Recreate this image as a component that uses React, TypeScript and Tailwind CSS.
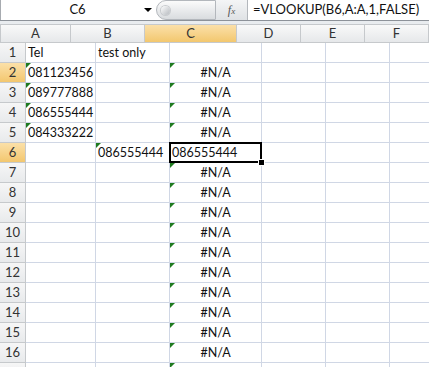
import React from 'react';

const cols = [
    { key: 'A', w: 'w-[70px]' },
    { key: 'B', w: 'w-[74px]' },
    { key: 'C', w: 'w-[92px]' },
    { key: 'D', w: 'w-[64px]' },
    { key: 'E', w: 'w-[64px]' },
    { key: 'F', w: 'w-[64px]' },
];

type Cell = { text: string; align?: 'left' | 'center'; flag?: boolean };

const phones = ['081123456', '089777888', '086555444', '084333222'];

function getCell(row: number, col: string): Cell | null {
    if (row === 1 && col === 'A') return { text: 'Tel' };
    if (row === 1 && col === 'B') return { text: 'test only' };
    if (row >= 2 && row <= 5 && col === 'A') return { text: phones[row - 2], flag: true };
    if (row === 6 && col === 'B') return { text: '086555444', flag: true };
    if (row === 6 && col === 'C') return { text: '086555444' };
    // row 17 is only a sliver at the bottom edge, so just its flag shows
    if (row === 17 && col === 'C') return { text: '', flag: true };
    if (row >= 2 && col === 'C') return { text: '#N/A', align: 'center', flag: true };
    return null;
}

function Flag() {
    return <span className="absolute left-0 top-0 h-0 w-0 border-r-[5px] border-t-[5px] border-r-transparent border-t-[#1f7a1f]" />;
}

export default function App() {
    const rows = Array.from({ length: 17 }, (_, i) => i + 1);
    return (
        <div className="h-[367px] w-[429px] overflow-hidden bg-white text-[12.5px] text-[#111]" style={{ fontFamily: 'Lato, "Open Sans", sans-serif' }}>
            {/* formula bar */}
            <div className="flex h-[21px] border-b border-[#8d9299] bg-white">
                <div className="flex w-[156px] items-center border-l border-[#a7abb0]">
                    <span className="flex-1 pl-[10px] text-center text-[13px]">C6</span>
                    <span className="mr-[4px] h-0 w-0 border-x-[4px] border-t-[4px] border-x-transparent border-t-black" />
                </div>
                <div className="relative flex w-[60px] items-center rounded-l-full border border-[#b3b7bc] bg-gradient-to-b from-[#fbfbfb] to-[#d9dcdf]">
                    <span className="ml-[4px] h-[9px] w-[9px] rounded-full bg-gradient-to-br from-white to-[#b5b9be] shadow-[0_0_0_1px_#c8cbce]" />
                </div>
                <div className="flex w-[32px] items-center justify-center border-r border-[#b3b7bc] bg-gradient-to-b from-[#f4f5f6] to-[#dfe2e5]">
                    <span className="text-[12px] italic text-[#555]" style={{ fontFamily: '"Liberation Serif", serif' }}>
                        f<span className="text-[9px]">x</span>
                    </span>
                </div>
                <div className="flex flex-1 items-center pl-[5px] text-[13px]">=VLOOKUP(B6,A:A,1,FALSE)</div>
            </div>
            <div className="h-[3px] bg-[#e9ecef]" />

            {/* header row */}
            <div className="flex h-[19px] border-y border-[#c6c9cc]">
                <div className="relative w-[26px] border-r border-[#c6c9cc] bg-gradient-to-b from-[#f5f5f5] to-[#e2e4e6]">
                    <span className="absolute bottom-[2px] right-[2px] h-0 w-0 border-b-[10px] border-l-[10px] border-b-[#b0b4b8] border-l-transparent" />
                </div>
                {cols.map((c) => (
                    <div
                        key={c.key}
                        className={`${c.w} flex shrink-0 items-center justify-center border-r border-[#c6c9cc] text-[13px] text-[#333] ${
                            c.key === 'C' ? 'bg-gradient-to-b from-[#fbe0a8] to-[#f3c76e]' : 'bg-gradient-to-b from-[#f9f9f9] to-[#e6e8ea]'
                        }`}
                    >
                        {c.key}
                    </div>
                ))}
            </div>

            {/* grid */}
            {rows.map((r) => (
                <div key={r} className="flex h-[20px]">
                    <div
                        className={`flex w-[26px] shrink-0 items-center justify-center border-b border-r border-[#c6c9cc] pt-[1px] text-[13px] text-[#333] ${
                            r === 2 || r === 6 ? 'bg-gradient-to-b from-[#fbe0a8] to-[#f3c76e]' : 'bg-gradient-to-b from-[#f6f6f6] to-[#e8eaec]'
                        }`}
                    >
                        {r < 17 ? r : ''}
                    </div>
                    {cols.map((c) => {
                        const cell = getCell(r, c.key);
                        const selected = r === 6 && c.key === 'C';
                        return (
                            <div
                                key={c.key}
                                className={`${c.w} relative flex shrink-0 items-center border-b border-r border-[#d0d7e5] pt-[2px] ${
                                    cell?.align === 'center' ? 'justify-center' : 'pl-[2px]'
                                } ${selected ? 'z-10' : ''}`}
                            >
                                {cell?.flag && <Flag />}
                                <span className="whitespace-nowrap">{cell?.text}</span>
                                {selected && (
                                    <>
                                        <span className="absolute -left-[1px] -top-[1px] bottom-[-1px] right-[-1px] border-2 border-black" />
                                        <span className="absolute -bottom-[4px] -right-[4px] h-[7px] w-[7px] border border-white bg-black" />
                                    </>
                                )}
                            </div>
                        );
                    })}
                </div>
            ))}
        </div>
    );
}
